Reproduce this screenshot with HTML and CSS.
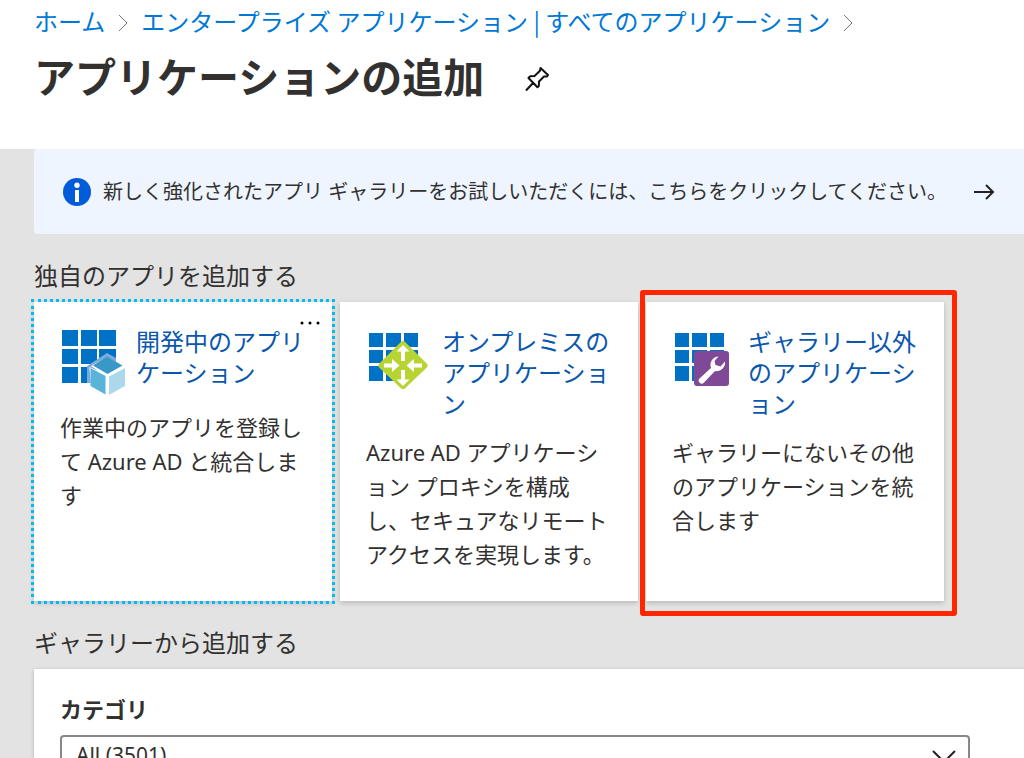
FILE: index.html
```html
<!DOCTYPE html>
<html lang="ja">
<head>
<meta charset="utf-8">
<title>アプリケーションの追加</title>
<link rel="stylesheet" href="styles.css">
</head>
<body>
<header class="page-header">
  <nav class="breadcrumb" aria-label="階層リンク">
    <a href="#">ホーム</a>
    <svg class="chevron" viewBox="0 0 10 18" aria-hidden="true"><path d="M1 1l8 8-8 8"/></svg>
    <a href="#">エンタープライズ アプリケーション | すべてのアプリケーション</a>
    <svg class="chevron" viewBox="0 0 10 18" aria-hidden="true"><path d="M1 1l8 8-8 8"/></svg>
  </nav>
  <div class="title-row">
    <h1>アプリケーションの追加</h1>
    <button class="pin" type="button" aria-label="ピン留め">
      <svg viewBox="0 0 24 26" aria-hidden="true"><path d="M15.500 2l7.500 7-1 1.500h-3L14 15.500l-.2 4.500-1.300 1.300L3.500 12 5 10.300l4.500-.3L15 4.800zM8 17l-7 7.500"/></svg>
    </button>
  </div>
</header>
<main class="content">
  <a class="banner" href="#">
    <svg class="info" viewBox="0 0 28 28" aria-hidden="true"><circle cx="14" cy="14" r="14" fill="#015cda"/><circle cx="14" cy="7.200" r="2.700" fill="#fff"/><path d="M12 12h4v12h-4z" fill="#fff"/></svg>
    <span class="banner-text">新しく強化されたアプリ ギャラリーをお試しいただくには、こちらをクリックしてください。</span>
    <svg class="arrow" viewBox="0 0 22 16" aria-hidden="true"><path d="M1 8h19M13 1l7 7-7 7"/></svg>
  </a>

  <h2>独自のアプリを追加する</h2>
  <div class="cards">
    <article class="card focused">
      <div class="card-head">
        <svg class="app-icon" viewBox="0 0 66 68" aria-hidden="true">
          <path fill="#0072c6" d="M2 4h16v16H2zM21 4h16v16H21zM39 4h17v16H39zM2 23h16v15H2zM21 23h16v15H21zM39 23h17v15H39zM2 41h16v16H2zM21 41h16v16H21z"/>
          <path fill="#7fa9dd" d="M27 57V40l20-13 9 5v8L36 57z"/>
          <path fill="#fff" d="M29.500 41L47 49l17-9v20L47 68l-16-8zM31 40l16-9 17 9-17 11z"/>
          <path fill="#3999c6" d="M47 30.500l15.500 9L47.500 48 33 39.500z"/>
          <path fill="#59b4d9" d="M30.500 42L45.500 50v18.500l-15-8.500z"/>
          <path fill="#acd8ec" d="M65 42v18l-16 9V50.500z"/>
        </svg>
        <h3><a href="#">開発中のアプリケーション</a></h3>
      </div>
      <p>作業中のアプリを登録して Azure AD と統合します</p>
      <button class="more" type="button" aria-label="その他"><svg viewBox="0 0 20 4" aria-hidden="true"><circle cx="2" cy="2" r="1.500"/><circle cx="10" cy="2" r="1.500"/><circle cx="18" cy="2" r="1.500"/></svg></button>
    </article>
    <article class="card">
      <div class="card-head">
        <svg class="app-icon" viewBox="0 0 66 68" aria-hidden="true">
          <path fill="#0072c6" d="M3 7h14v14H3zM20 7h15v14H20zM38 7h14v14H38zM3 24h14v13H3zM20 24h15v13H20zM38 24h14v13H38zM3 40h14v15H3zM20 40h15v15H20z"/>
          <path fill="#b8d432" stroke="#b8d432" stroke-width="6" stroke-linejoin="round" d="M37 18l21.500 21.500L37 60 15.500 39.500z"/>
          <path fill="#fff" d="M37 19l6.500 6.500H39V35h-4v-9.500h-4.500zM37 60l-6.500-6.500H35V44h4v9.500h4.500zM33.500 39.500L26 46v-4.500h-8v-4h8V33zM40.500 39.500l7.500-6.500v4.500h8v4h-8V46z"/>
        </svg>
        <h3><a href="#">オンプレミスのアプリケーション</a></h3>
      </div>
      <p>Azure AD アプリケーション プロキシを構成し、セキュアなリモート アクセスを実現します。</p>
    </article>
    <article class="card marked">
      <div class="card-head">
        <svg class="app-icon" viewBox="0 0 66 68" aria-hidden="true">
          <path fill="#0072c6" d="M3 7h14v14H3zM20 7h15v14H20zM38 7h14v14H38zM3 24h14v13H3zM20 24h15v13H20zM38 24h14v13H38zM3 40h14v15H3zM20 40h15v15H20z"/>
          <rect x="22" y="25" width="35" height="35" rx="3" fill="#804998"/>
          <path fill="#fff" d="M46.500 30.500a8.500 8.500 0 0 0-7.500 11.500L27.500 52.500a3 3 0 0 0 4.500 4L43 45a8.500 8.500 0 0 0 10-9.500l-4.500 5-5-1.500-1-4z"/>
        </svg>
        <h3><a href="#">ギャラリー以外のアプリケーション</a></h3>
      </div>
      <p>ギャラリーにないその他のアプリケーションを統合します</p>
    </article>
  </div>

  <h2>ギャラリーから追加する</h2>
  <section class="panel">
    <label for="category">カテゴリ</label>
    <div class="select-wrap">
      <select id="category"><option>All (3501)</option></select>
      <svg class="caret" viewBox="0 0 24 14" aria-hidden="true"><path d="M1 1l11 11L23 1"/></svg>
    </div>
  </section>
</main>
</body>
</html>
```

FILE: styles.css
```css
* { box-sizing: border-box; }

html { height: 100%; }

body {
  margin: 0;
  height: 100%;
  overflow: hidden;
  background: #e3e3e3;
  color: #323130;
  font-family: "Noto Sans", "Noto Sans CJK JP", sans-serif;
  line-break: loose;
}

a { color: inherit; text-decoration: none; }
h1, h2, h3, p { margin: 0; font-weight: 400; }
svg { flex: none; }
button { border: 0; padding: 0; background: none; cursor: pointer; }

.page-header {
  background: #fff;
  padding: 5px 34px 42px;
}

.breadcrumb {
  display: flex;
  align-items: center;
  gap: 13px;
  font-size: 24px;
  line-height: 32px;
  color: #0078d4;
  white-space: nowrap;
  font-family: "Noto Sans CJK JP", sans-serif;
}

.chevron {
  width: 10px;
  height: 18px;
  margin-top: 4px;
  fill: none;
  stroke: #797775;
}

.title-row {
  display: flex;
  align-items: center;
  gap: 41px;
  padding-top: 10px;
}

h1 {
  font-size: 41px;
  line-height: 60px;
  font-weight: 700;
}

.pin { padding-top: 4px; }

.pin svg {
  display: block;
  width: 24px;
  height: 26px;
  fill: none;
  stroke: #111;
  stroke-width: 2;
  stroke-linejoin: round;
}

.content { padding-left: 34px; }

.banner {
  display: flex;
  align-items: center;
  padding: 24px 29px;
  border-radius: 4px 0 0 4px;
  background: #eff5ff;
  font-size: 20px;
  line-height: 37px;
  white-space: nowrap;
}

.info { width: 28px; height: 28px; margin-right: 12px; }

.arrow {
  width: 22px;
  height: 16px;
  margin-left: auto;
  fill: none;
  stroke: #222;
  stroke-width: 2;
}

h2 {
  padding: 26px 0 10px;
  font-size: 24px;
  line-height: 32px;
}

.cards {
  display: grid;
  grid-template-columns: repeat(auto-fill, 298px);
  gap: 8px;
}

.card {
  position: relative;
  min-height: 299px;
  padding: 24px 26px;
  background: #fff;
  box-shadow: 0 2px 5px rgba(0, 0, 0, .2);
}

.focused { outline: 3px dotted #00bcf2; }

.marked::after {
  content: "";
  position: absolute;
  inset: -12px -13px -15px -6px;
  border: 5px solid #ff2600;
  border-radius: 3px;
  pointer-events: none;
}

.card-head {
  display: flex;
  gap: 10px;
  margin-bottom: 16px;
}

.app-icon { width: 66px; height: 68px; overflow: visible; }

h3 {
  font-size: 24px;
  line-height: 31px;
  color: #0a57ac;
}

.card p {
  font-size: 22px;
  line-height: 34px;
}

.more {
  position: absolute;
  top: 0;
  right: 0;
  display: flex;
  justify-content: center;
  align-items: flex-end;
  width: 44px;
  height: 31px;
  padding-bottom: 8px;
  background: #fff;
}

.more svg { width: 20px; height: 4px; }

.panel {
  padding: 25px 54px 24px 26px;
  background: #fff;
  box-shadow: 0 1px 4px rgba(0, 0, 0, .2);
}

.panel label {
  display: block;
  font-size: 22px;
  line-height: 30px;
  font-weight: 700;
}

.select-wrap {
  position: relative;
  margin-top: 11px;
}

select {
  appearance: none;
  display: block;
  width: 100%;
  height: 40px;
  padding: 0 48px 0 14px;
  border: 2px solid #8a8886;
  border-radius: 4px;
  background: #fff;
  color: #323130;
  font: inherit;
  font-size: 21px;
}

.caret {
  position: absolute;
  right: 14px;
  top: 15px;
  width: 24px;
  height: 14px;
  fill: none;
  stroke: #222;
  stroke-width: 2;
  pointer-events: none;
}
```
